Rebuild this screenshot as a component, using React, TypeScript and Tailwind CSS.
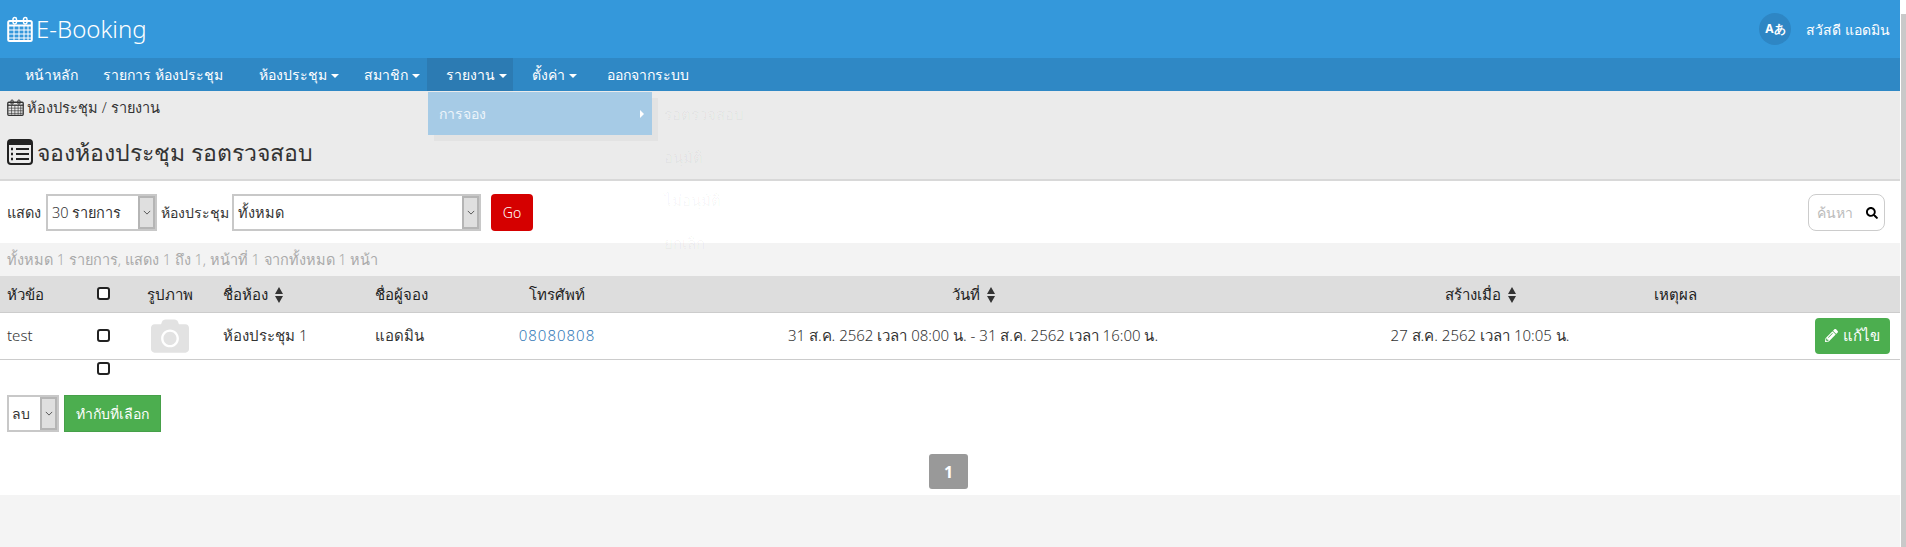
import { FaCamera, FaPencilAlt, FaSearch } from "react-icons/fa";

function CalendarIcon({ className }: { className: string }) {
  return (
    <svg viewBox="0 0 26 26" className={className} fill="none" stroke="currentColor">
      <rect x="1.200" y="5" width="23.600" height="20" rx="1.500" strokeWidth="2" />
      <path d="M1 9.500h24" strokeWidth="2" />
      <path d="M2 14h22M2 18h22M2 22h22M7 10v14M12 10v14M17 10v14M21 10v14" strokeWidth="1" />
      <rect x="6" y="1.500" width="3.500" height="6.500" rx="1.700" strokeWidth="1.500" />
      <rect x="16.500" y="1.500" width="3.500" height="6.500" rx="1.700" strokeWidth="1.500" />
    </svg>
  );
}

function ListIcon() {
  return (
    <svg viewBox="0 0 26 26" className="h-[26px] w-[26px] text-[#222]" fill="none" stroke="currentColor">
      <rect x="1" y="1" width="24" height="24" rx="3" strokeWidth="2" />
      <path d="M1 4a3 3 0 0 1 3-3h18a3 3 0 0 1 3 3v2H1z" fill="currentColor" stroke="none" />
      <path d="M9 10h13M9 15h13M9 20h13" strokeWidth="2" />
      <path d="M4 10h2M4 15h2M4 20h2" strokeWidth="2.500" />
    </svg>
  );
}

function SortIcon() {
  return (
    <svg viewBox="0 0 8 16" className="ml-[7px] inline h-[16px] w-[8px] align-middle text-[#333]" fill="currentColor">
      <path d="M4 0l4 7H0zM0 9h8l-4 7z" />
    </svg>
  );
}

function Chevron() {
  return (
    <span className="flex h-full w-[17px] items-center justify-center border-2 border-[#b5b5b5] bg-[#dfdfdf]">
      <svg viewBox="0 0 10 6" className="h-[5px] w-[8px]" fill="none" stroke="#555" strokeWidth="1.2">
        <path d="M1 1l4 4 4-4" />
      </svg>
    </span>
  );
}

function FakeSelect({ label, width }: { label: string; width: string }) {
  return (
    <div className={`flex h-[37px] items-center justify-between border-2 border-[#c8c8c8] bg-white pl-[4px] text-[14.5px] text-[#333] ${width}`}>
      <span>{label}</span>
      <Chevron />
    </div>
  );
}

function Box() {
  return <span className="mx-auto block h-[13px] w-[13px] rounded-[3px] border-2 border-[#222] bg-white" />;
}

function NavItem({ label, caret, className }: { label: string; caret?: boolean; className: string }) {
  return (
    <div className={`flex h-full items-center justify-center gap-[4px] text-[14px] whitespace-nowrap text-white ${className}`}>
      <span>{label}</span>
      {caret && <span className="mt-[2px] h-0 w-0 border-x-[4px] border-t-[4px] border-x-transparent border-t-white" />}
    </div>
  );
}

export default function App() {
  return (
    <div className="flex h-[547px] w-[1906px] overflow-hidden bg-white font-['Noto_Sans',sans-serif] font-light">
      <div className="relative flex w-[1900px] flex-col bg-[#f4f4f4]">
        <header className="flex h-[58px] items-center justify-between bg-[#3498db] pr-[10px] pl-[7px] text-white">
          <div className="flex items-center gap-[3px] text-[24px]">
            <CalendarIcon className="h-[26px] w-[26px] text-white" />
            <span>E-Booking</span>
          </div>
          <div className="flex items-center gap-[15px] text-[14px]">
            <span className="flex h-[32px] w-[32px] items-center justify-center rounded-full bg-[#2e86c4] text-[12px] font-bold">Aあ</span>
            <span>สวัสดี แอดมิน</span>
          </div>
        </header>
        <nav className="flex h-[33px] items-center bg-[#2f88c5]">
          <NavItem label="หน้าหลัก" className="w-[102px]" />
          <NavItem label="รายการ ห้องประชุม" className="w-[122px]" />
          <NavItem label="ห้องประชุม" caret className="ml-[36px] w-[78px]" />
          <NavItem label="สมาชิก" caret className="ml-[19px] w-[70px]" />
          <NavItem label="รายงาน" caret className="w-[86px] bg-[#2c7bb3] pl-[12px]" />
          <NavItem label="ตั้งค่า" caret className="w-[82px]" />
          <NavItem label="ออกจากระบบ" className="w-[106px]" />
        </nav>

        <div className="h-[90px] border-b-[2px] border-[#d8d8d8] bg-[#ebebeb] pl-[7px] text-[#333]">
          <div className="flex h-[33px] items-center gap-[3px] text-[14.5px]">
            <CalendarIcon className="h-[17px] w-[17px] text-[#333]" />
            <span>ห้องประชุม / รายงาน</span>
          </div>
          <div className="mt-[11px] flex items-center gap-[4px] text-[23px]">
            <ListIcon />
            <span>จองห้องประชุม รอตรวจสอบ</span>
          </div>
        </div>

        <div className="flex h-[314px] flex-col bg-white">
          <div className="flex h-[62px] items-center pr-[15px] pl-[7px] pt-[1px] text-[14.5px] text-[#333]">
            <span className="mr-[5px] w-[34px]">แสดง</span>
            <FakeSelect label="30 รายการ" width="w-[111px]" />
            <span className="w-[75px] text-center text-[14px]">ห้องประชุม</span>
            <FakeSelect label="ทั้งหมด" width="w-[249px]" />
            <button className="ml-[10px] h-[37px] w-[42px] rounded-[4px] bg-[#d50000] text-[14px] text-white">Go</button>
            <div className="ml-auto flex h-[37px] w-[77px] items-center justify-between rounded-[8px] border border-[#ccc] pr-[6px] pl-[8px] text-[14px] text-[#bbb]">
              <span>ค้นหา</span>
              <FaSearch className="h-[12px] w-[12px] text-black" />
            </div>
          </div>
          <div className="flex h-[33px] items-center bg-[#f3f3f3] pl-[7px] text-[14.5px] text-[#aaa]">
            ทั้งหมด 1 รายการ, แสดง 1 ถึง 1, หน้าที่ 1 จากทั้งหมด 1 หน้า
          </div>
          <table className="w-full table-fixed text-[15px] text-[#333]">
            <colgroup>
              <col className="w-[75px]" />
              <col className="w-[56px]" />
              <col className="w-[78px]" />
              <col className="w-[156px]" />
              <col className="w-[125px]" />
              <col className="w-[134px]" />
              <col className="w-[698px]" />
              <col className="w-[316px]" />
              <col className="w-[74px]" />
              <col />
            </colgroup>
            <thead>
              <tr className="h-[36px] border-b border-[#ccc] bg-[#dddddd] text-[#222]">
                <th className="pl-[7px] text-left font-medium">หัวข้อ</th>
                <th><Box /></th>
                <th className="font-medium">รูปภาพ</th>
                <th className="pl-[14px] text-left font-medium">ชื่อห้อง<SortIcon /></th>
                <th className="pl-[10px] text-left font-medium">ชื่อผู้จอง</th>
                <th className="font-medium">โทรศัพท์</th>
                <th className="font-medium">วันที่<SortIcon /></th>
                <th className="font-medium">สร้างเมื่อ<SortIcon /></th>
                <th className="font-medium">เหตุผล</th>
                <th />
              </tr>
            </thead>
            <tbody>
              <tr className="h-[47px] border-b border-[#ccc]">
                <td className="pl-[7px]">test</td>
                <td><Box /></td>
                <td className="text-center"><FaCamera className="mx-auto h-[38px] w-[38px] text-[#e2e2e2]" /></td>
                <td className="pl-[14px]">ห้องประชุม 1</td>
                <td className="pl-[10px]">แอดมิน</td>
                <td className="text-center tracking-[1px] text-[#337ab7]">08080808</td>
                <td className="text-center">31 ส.ค. 2562 เวลา 08:00 น. - 31 ส.ค. 2562 เวลา 16:00 น.</td>
                <td className="text-center">27 ส.ค. 2562 เวลา 10:05 น.</td>
                <td />
                <td className="pr-[10px] text-right">
                  <button className="inline-flex h-[36px] w-[75px] items-center justify-center gap-[5px] rounded-[4px] bg-[#4cae4f] text-white">
                    <FaPencilAlt className="h-[13px] w-[13px]" />
                    <span>แก้ไข</span>
                  </button>
                </td>
              </tr>
              <tr className="h-[18px]">
                <td />
                <td><Box /></td>
              </tr>
            </tbody>
          </table>
          <div className="mt-[18px] flex items-center gap-[5px] pl-[7px] text-[14px]">
            <div className="flex h-[37px] w-[52px] items-center justify-between border-2 border-[#c8c8c8] pl-[3px] text-[#333]">
              <span>ลบ</span>
              <Chevron />
            </div>
            <button className="h-[37px] w-[97px] border border-[#46a049] bg-[#4cae4f] text-white">ทำกับที่เลือก</button>
          </div>
          <div className="mt-[22px] flex justify-center pr-[3px]">
            <span className="flex h-[35px] w-[39px] items-center justify-center rounded-[3px] bg-[#999] text-[16px] font-bold text-white">1</span>
          </div>
        </div>

        <div className="absolute top-[92px] left-[428px] flex h-[43px] w-[224px] items-center justify-between bg-[#a6cbe6] pr-[8px] pl-[11px] text-[14px] text-white/80 shadow-[6px_6px_0_rgba(0,0,0,0.03)]">
          <span>การจอง</span>
          <span className="h-0 w-0 border-y-[4px] border-l-[4px] border-y-transparent border-l-white" />
        </div>
        <div className="absolute top-[93px] left-[652px] flex w-[140px] flex-col pl-[12px] text-[15px] text-black/[0.04]">
          <span className="flex h-[43px] items-center">รอตรวจสอบ</span>
          <span className="flex h-[43px] items-center">อนุมัติ</span>
          <span className="flex h-[43px] items-center">ไม่อนุมัติ</span>
          <span className="flex h-[43px] items-center">ยกเลิก</span>
        </div>
      </div>
      <div className="ml-[1px] flex w-[5px] flex-col bg-[#f1f1f1]">
        <div className="h-[14px] bg-white" />
        <div className="flex-1 bg-[#c9c9c9]" />
      </div>
    </div>
  );
}
